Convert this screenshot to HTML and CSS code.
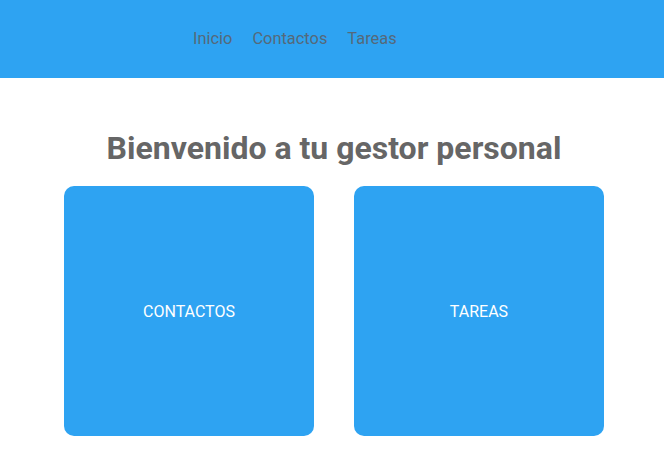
FILE: index.html
```html
<!DOCTYPE html>
<html lang="es">
<head>
<meta charset="utf-8">
<title>Gestor personal</title>
<link rel="stylesheet" href="styles.css">
</head>
<body>
<header class="topbar">
  <nav class="nav">
    <a class="nav-link" href="#">Inicio</a>
    <a class="nav-link" href="#">Contactos</a>
    <a class="nav-link" href="#">Tareas</a>
  </nav>
</header>
<main class="main">
  <h1 class="title">Bienvenido a tu gestor personal</h1>
  <div class="cards">
    <a class="card" href="#">CONTACTOS</a>
    <a class="card" href="#">TAREAS</a>
  </div>
</main>
</body>
</html>
```

FILE: styles.css
```css
html, body {
  margin: 0;
  padding: 0;
  background: #ffffff;
  font-family: Roboto, "Liberation Sans", sans-serif;
}

.topbar {
  height: 78px;
  background: #2ea3f2;
  display: flex;
  align-items: flex-start;
}

.nav {
  display: flex;
  gap: 20px;
  padding: 29px 0 0 193px;
}

.nav-link {
  color: #55697a;
  text-decoration: none;
  font-size: 16.4px;
  line-height: 19px;
}

.main {
  display: flex;
  flex-direction: column;
  align-items: center;
  padding-left: 4px;
}

.title {
  margin: 51px 0 0;
  font-size: 32px;
  line-height: 38px;
  font-weight: 700;
  color: #666666;
}

.cards {
  display: flex;
  gap: 40px;
  margin-top: 19px;
}

.card {
  width: 250px;
  height: 250px;
  border-radius: 10px;
  background: #2ea3f2;
  color: #ffffff;
  text-decoration: none;
  font-size: 16px;
  display: flex;
  align-items: center;
  justify-content: center;
}
```
